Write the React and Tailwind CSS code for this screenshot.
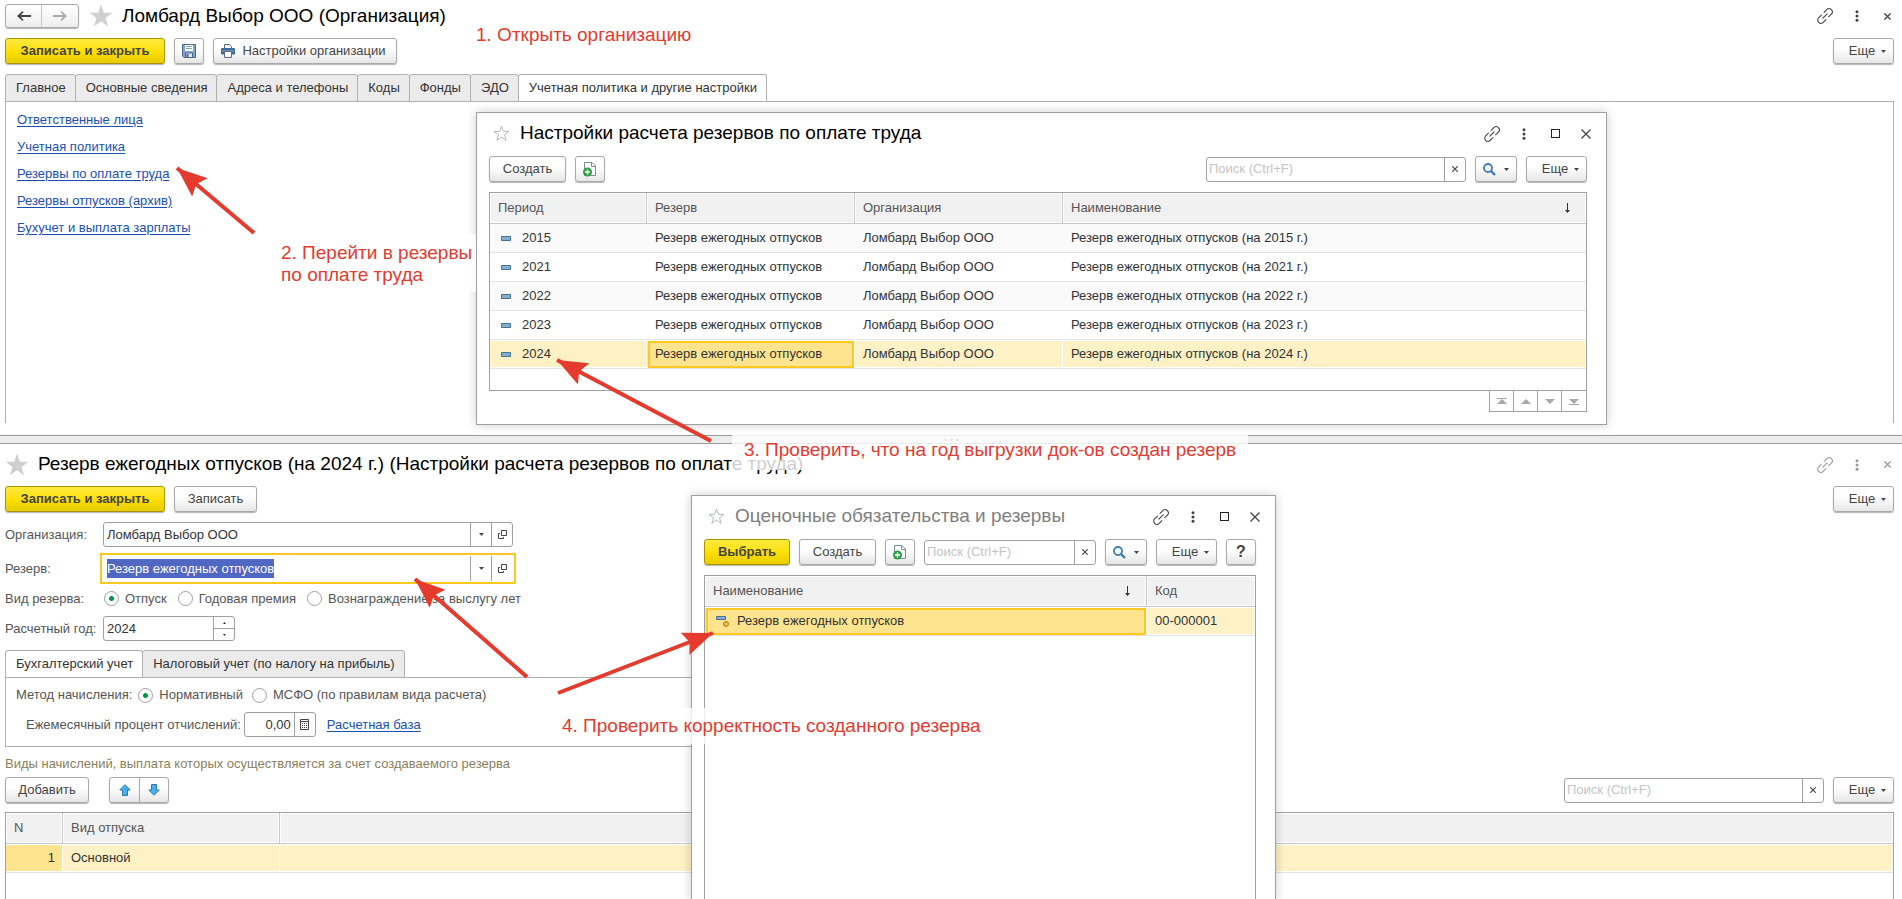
import clsx from "clsx"

const topTabs = ["Главное", "Основные сведения", "Адреса и телефоны", "Коды", "Фонды", "ЭДО", "Учетная политика и другие настройки"]

const links = [
  "Ответственные лица",
  "Учетная политика",
  "Резервы по оплате труда",
  "Резервы отпусков (архив)",
  "Бухучет и выплата зарплаты",
]

const years = [2015, 2021, 2022, 2023, 2024]

// Icons
const StarSolid = () => (
  <svg width="24" height="24" viewBox="0 0 24 24" className="shrink-0" aria-hidden="true">
    <path d="M12 0.5l2.8 8.3h8.7l-7 5.2 2.7 8.5-7.2-5.2-7.2 5.2L7.500 14l-7-5.200h8.700z" fill="#cfcfcf" />
  </svg>
)

const StarOutline = () => (
  <svg width="17" height="17" viewBox="0 0 17 17" className="shrink-0" aria-hidden="true">
    <path d="M8.500 1.200l1.900 5.200h5.600l-4.500 3.400 1.700 5.600-4.700-3.400-4.700 3.400 1.700-5.600L1 6.400h5.600z" fill="none" stroke="#b4b8bc" />
  </svg>
)

const LinkIcon = ({ color }) => (
  <svg width="16" height="16" viewBox="0 0 16 16" fill="none" stroke={color} strokeWidth="1.100" overflow="visible" aria-hidden="true">
    <g transform="rotate(-45 8 8)">
      <path d="M6.500 4.800H2.200a3.200 3.200 0 0 0 0 6.400H6.500M9.500 4.800H13.800a3.200 3.200 0 0 1 0 6.400H9.500M4.500 8H11.500" />
    </g>
  </svg>
)

const DotsIcon = ({ color }) => (
  <svg width="4" height="12" viewBox="0 0 4 12" fill={color} aria-hidden="true">
    <circle cx="2" cy="1.700" r="1.500" />
    <circle cx="2" cy="6" r="1.500" />
    <circle cx="2" cy="10.300" r="1.500" />
  </svg>
)

const CrossIcon = ({ size, color }) => (
  <svg width={size} height={size} viewBox="0 0 10 10" stroke={color} strokeWidth={size < 10 ? 1.9 : 1.3} aria-hidden="true">
    <path d="M0.500 0.500l9 9M9.500 0.500l-9 9" />
  </svg>
)

const ArrowIcon = ({ color, flip }) => (
  <svg width="14" height="12" viewBox="0 0 14 12" className={clsx(flip && "rotate-180")} aria-hidden="true">
    <path d="M0 6l5.500-5 1 1L4 5h10v2H4l2.500 3-1 1z" fill={color} />
  </svg>
)

const SaveIcon = () => (
  <svg width="14" height="14" viewBox="0 0 14 14" aria-hidden="true">
    <path d="M0.500 0.500h13v13h-11.500l-1.500-1.500z" fill="#7fa6cf" stroke="#48698f" />
    <path d="M3 1h8v6H3z" fill="#fff" />
    <path d="M4 2.500h6M4 4.500h6" stroke="#8fa2b5" />
    <path d="M3.500 9h7v4.500h-7z" fill="#dfe6ec" stroke="#48698f" />
    <path d="M4.500 10h2v3h-2z" fill="#48698f" />
  </svg>
)

const PrintIcon = () => (
  <svg width="14" height="14" viewBox="0 0 14 14" aria-hidden="true">
    <path d="M3.500 4.500v-4h5l2 2v2" fill="#fff" stroke="#5b6f86" />
    <rect x="0" y="4" width="14" height="6.500" rx="1" fill="#3f6c9b" />
    <path d="M1 7h12" stroke="#86a9cc" />
    <path d="M3.500 7.500h7v6h-7z" fill="#fff" stroke="#5b6f86" />
  </svg>
)

const CopyIcon = () => (
  <svg width="14" height="16" viewBox="0 0 14 16" aria-hidden="true">
    <path d="M1.500 1.500h7.500l3.500 3.500v9.500h-11z" fill="#fff" stroke="#7c8c9d" />
    <path d="M8.500 1.500v4h4" fill="none" stroke="#7c8c9d" />
    <circle cx="4.500" cy="11" r="4.500" fill="#2f9e44" />
    <path d="M4.500 8.500v5M2 11h5" stroke="#fff" strokeWidth="1.400" />
  </svg>
)

const SearchIcon = () => (
  <svg width="13" height="13" viewBox="0 0 13 13" fill="none" stroke="#3b7db4" aria-hidden="true">
    <circle cx="5" cy="5" r="4" strokeWidth="1.800" />
    <path d="M8 8l4 4" strokeWidth="2.400" />
  </svg>
)

const Caret = () => (
  <svg width="5" height="3" viewBox="0 0 5 3" aria-hidden="true">
    <path d="M0 0h5L2.500 3z" fill="#444" />
  </svg>
)

const OpenIcon = () => (
  <svg width="9" height="9" viewBox="0 0 9 9" fill="none" stroke="#444" aria-hidden="true">
    <path d="M3.500 0.500h5v5h-5zM2 3.500H0.500v5h5V7" />
  </svg>
)

const CalcIcon = () => (
  <svg width="9" height="11" viewBox="0 0 9 11" fill="none" stroke="#444" aria-hidden="true">
    <path d="M0.500 0.500h8v10h-8zM1 2.500h7" />
    <path d="M2 4.500h5M2 6.500h5M2 8.500h5" strokeDasharray="1 1" />
  </svg>
)

const SortIcon = () => (
  <svg width="5" height="10" viewBox="0 0 5 10" aria-hidden="true">
    <path d="M2 0h1v7h2L2.500 10 0 7h2z" fill="#333" />
  </svg>
)

const ItemIcon = () => (
  <svg width="10" height="5" viewBox="0 0 10 5" className="shrink-0" aria-hidden="true">
    <path d="M0.500 0.500h9v4h-9z" fill="#7fb0d8" stroke="#4a6f8f" />
  </svg>
)

const PredefinedIcon = () => (
  <svg width="13" height="11" viewBox="0 0 13 11" className="shrink-0" aria-hidden="true">
    <path d="M0.500 0.500h9v3h-9z" fill="#7fb0d8" stroke="#4a6f8f" />
    <circle cx="10" cy="8" r="2.500" fill="#f2b632" stroke="#a8842a" />
  </svg>
)

const MoveArrow = ({ flip }) => (
  <svg width="12" height="12" viewBox="0 0 12 12" className={clsx(flip && "rotate-180")} aria-hidden="true">
    <path d="M6 0.700l5.200 5.300H8.500v5.500h-5V6H0.800z" fill="#45b0ee" stroke="#2b78a8" />
  </svg>
)

const ScrollIcon = ({ bar, flip }) => (
  <svg width="10" height="7" viewBox="0 0 10 7" fill="#a8a8a8" className={clsx(flip && "rotate-180")} aria-hidden="true">
    {bar && <path d="M0 0h10v1H0z" />}
    <path d="M5 1l5 5H0z" />
  </svg>
)

// Controls
function Button({ children, primary, className, ...props }) {
  return (
    <button
      className={clsx(
        "flex h-[26px] shrink-0 items-center justify-center rounded-[3px] border shadow-[0_1px_1px_#b4b4b4]",
        primary
          ? "border-[#a89400] bg-linear-to-b from-[#ffea3c] via-[#fde000] to-[#e8cc00] font-bold text-[#444]"
          : "border-[#a9a9a9] bg-linear-to-b from-white from-40% to-[#e6e6e6] text-[#444]",
        className
      )}
      {...props}
    >
      {children}
    </button>
  )
}

const MoreButton = () => (
  <Button className="w-[61px] gap-[6px] pl-2">
    Еще <Caret />
  </Button>
)

const FindButton = () => (
  <Button className="w-[42px] gap-2" aria-label="Найти">
    <SearchIcon />
    <Caret />
  </Button>
)

const CopyButton = () => (
  <Button className="w-[30px]" aria-label="Скопировать">
    <CopyIcon />
  </Button>
)

function Search({ className }) {
  return (
    <div className={clsx("flex h-[25px] rounded-[3px] border border-[#a0a0a0] bg-white", className)}>
      <input
        type="text"
        aria-label="Поиск"
        placeholder="Поиск (Ctrl+F)"
        className="min-w-0 flex-1 px-[2px] outline-none placeholder:text-[#c4c4c4]"
      />
      <button aria-label="Очистить" className="flex w-[21px] items-center justify-center border-l border-[#a0a0a0]">
        <CrossIcon size={6} color="#444" />
      </button>
    </div>
  )
}

function Tab({ children, active }) {
  return (
    <button
      role="tab"
      aria-selected={!!active}
      className={clsx(
        "-ml-px h-[28px] rounded-t-[3px] border border-[#b0b0b0] pr-[9px] pl-[10px] text-[#333]",
        active ? "border-b-white bg-white" : "bg-[#ebebeb]"
      )}
    >
      {children}
    </button>
  )
}

function Radio({ id, name, label, checked }) {
  return (
    <span className="flex items-center gap-[6px]">
      <input
        type="radio"
        id={id}
        name={name}
        defaultChecked={checked}
        className="size-[15px] appearance-none rounded-full border border-[#a0a0a0] bg-white checked:bg-[radial-gradient(circle,#009846_2px,white_3px)]"
      />
      <label htmlFor={id}>{label}</label>
    </span>
  )
}

const WindowIcons = ({ color = "#444", full }) => (
  <div className={clsx("ml-auto flex shrink-0 items-center", !full && "pr-[3px]")}>
    <button aria-label="Получить ссылку"><LinkIcon color={color} /></button>
    <button aria-label="Дополнительно" className="ml-[22px]"><DotsIcon color={color} /></button>
    {full ? (
      <>
        <button aria-label="Развернуть" className="ml-[25px] size-[9px] border border-[#222]"></button>
        <button aria-label="Закрыть" className="ml-[21px]"><CrossIcon size={10} color={color} /></button>
      </>
    ) : (
      <button aria-label="Закрыть" className="ml-[25px]"><CrossIcon size={7} color={color} /></button>
    )}
  </div>
)

function Th({ children, className }) {
  return (
    <th
      className={clsx(
        "h-[31px] border-b border-[#c8c8c8] bg-[#f1f1f1] px-2 text-left font-normal text-[#555] shadow-[inset_0_0_0_1px_white]",
        className
      )}
    >
      {children}
    </th>
  )
}

function Td({ children, selected, current, stripe, className }) {
  return (
    <td
      className={clsx(
        "h-[29px] border-b border-[#e4e4e4] px-2",
        stripe && "bg-[#fafafa]",
        selected && "shadow-[inset_0_1px_0_white,inset_0_-1px_0_white,inset_-1px_0_0_white]",
        selected && (current ? "bg-[#ffe48f]" : "bg-[#fdf1c5]"),
        className
      )}
    >
      {children}
    </td>
  )
}

const focusCell = "outline-2 -outline-offset-3 outline-[#fdc821]"

function ReservesWindow() {
  return (
    <section className="absolute top-[112px] left-[476px] z-10 w-[1131px] border border-[#a0a0a0] bg-white px-3 pb-3 shadow-[0_0_10px_rgba(0,0,0,0.2)]">
      <header className="flex h-[43px] items-center pr-[3px] pb-[2px] pl-1">
        <StarOutline />
        <h2 className="ml-[10px] text-[19px] text-black">Настройки расчета резервов по оплате труда</h2>
        <WindowIcons full />
      </header>
      <div className="flex items-center gap-[9px] pr-[7px]">
        <Button className="w-[77px]">Создать</Button>
        <CopyButton />
        <Search className="ml-auto w-[260px]" />
        <FindButton />
        <MoreButton />
      </div>
      <div className="mt-[10px] mr-[7px]">
        <div className="h-[199px] border border-[#a0a0a0]">
          <table className="w-full table-fixed border-separate border-spacing-0 whitespace-nowrap">
            <colgroup>
              <col className="w-[157px]" />
              <col className="w-[208px]" />
              <col className="w-[208px]" />
              <col />
            </colgroup>
            <thead>
              <tr>
                <Th className="border-r">Период</Th>
                <Th className="border-r">Резерв</Th>
                <Th className="border-r">Организация</Th>
                <Th>
                  <span className="flex items-center justify-between pr-2">
                    Наименование <SortIcon />
                  </span>
                </Th>
              </tr>
            </thead>
            <tbody>
              {years.map((year, i) => {
                const row = { stripe: i % 2 === 0, selected: year === 2024 }
                return (
                  <tr key={year}>
                    <Td {...row}>
                      <span className="flex items-center gap-[11px] pl-[3px]">
                        <ItemIcon /> {year}
                      </span>
                    </Td>
                    <Td {...row} current className={clsx(row.selected && focusCell)}>Резерв ежегодных отпусков</Td>
                    <Td {...row}>Ломбард Выбор ООО</Td>
                    <Td {...row}>Резерв ежегодных отпусков (на {year} г.)</Td>
                  </tr>
                )
              })}
            </tbody>
          </table>
        </div>
        <div className="-mt-px flex justify-end">
          <div className="flex h-[22px] divide-x divide-[#a0a0a0] border border-[#a0a0a0] *:flex *:w-[24px] *:items-center *:justify-center">
            <button aria-label="В начало"><ScrollIcon bar /></button>
            <button aria-label="Вверх"><ScrollIcon /></button>
            <button aria-label="Вниз"><ScrollIcon flip /></button>
            <button aria-label="В конец"><ScrollIcon bar flip /></button>
          </div>
        </div>
      </div>
    </section>
  )
}

function ObligationsWindow() {
  return (
    <section className="absolute top-[495px] -bottom-1 left-[691px] z-10 flex w-[585px] flex-col border border-[#a0a0a0] bg-white pr-[19px] pl-3 shadow-[0_0_10px_rgba(0,0,0,0.2)]">
      <header className="-mr-1 flex h-[43px] shrink-0 items-center pb-[2px] pl-1">
        <StarOutline />
        <h2 className="ml-[10px] text-[19px] text-[#808080]">Оценочные обязательства и резервы</h2>
        <WindowIcons full />
      </header>
      <div className="flex items-center gap-[9px]">
        <Button primary className="w-[86px]">Выбрать</Button>
        <Button className="w-[77px]">Создать</Button>
        <CopyButton />
        <Search className="min-w-0 flex-1" />
        <FindButton />
        <MoreButton />
        <Button className="w-[30px] text-base font-bold">?</Button>
      </div>
      <div className="mt-[10px] flex-1 border border-[#a0a0a0]">
        <table className="w-full table-fixed border-separate border-spacing-0 whitespace-nowrap">
          <colgroup>
            <col />
            <col className="w-[108px]" />
          </colgroup>
          <thead>
            <tr>
              <Th className="border-r">
                <span className="flex items-center justify-between pr-2">
                  Наименование <SortIcon />
                </span>
              </Th>
              <Th>Код</Th>
            </tr>
          </thead>
          <tbody>
            <tr>
              <Td selected current className={focusCell}>
                <span className="flex items-center gap-2 pl-[3px]">
                  <PredefinedIcon /> Резерв ежегодных отпусков
                </span>
              </Td>
              <Td selected>00-000001</Td>
            </tr>
          </tbody>
        </table>
      </div>
    </section>
  )
}

function OrganizationPane() {
  return (
    <main className="flex h-[435px] shrink-0 flex-col pr-2 pl-[5px]">
      <header className="flex h-[34px] items-center pb-[2px]">
        <div className="flex h-[24px] divide-x divide-[#c8c8c8] rounded-[3px] border border-[#a9a9a9] bg-linear-to-b from-white to-[#eee] shadow-[0_1px_1px_#b4b4b4] *:flex *:w-[36px] *:items-center *:justify-center">
          <button aria-label="Назад"><ArrowIcon color="#444" /></button>
          <button aria-label="Вперед"><ArrowIcon color="#aaa" flip /></button>
        </div>
        <span className="ml-[10px]"><StarSolid /></span>
        <h1 className="ml-[9px] text-[19px] text-black">Ломбард Выбор ООО (Организация)</h1>
        <WindowIcons />
      </header>
      <div className="mt-1 flex gap-[9px]">
        <Button primary className="w-[160px]">Записать и закрыть</Button>
        <Button className="w-[30px]" aria-label="Записать"><SaveIcon /></Button>
        <Button className="w-[184px] gap-[7px] pr-[3px]">
          <PrintIcon /> Настройки организации
        </Button>
        <div className="ml-auto"><MoreButton /></div>
      </div>
      <div role="tablist" className="mt-[10px] -mb-px flex pl-px">
        {topTabs.map((tab, i) => (
          <Tab key={tab} active={i === topTabs.length - 1}>{tab}</Tab>
        ))}
      </div>
      <nav className="mb-3 flex flex-1 flex-col items-start gap-[11px] border border-b-0 border-[#b0b0b0] pt-[10px] pl-[11px] leading-4">
        {links.map((link) => (
          <a key={link} href="#" className="text-[#1a50b4] underline underline-offset-2">{link}</a>
        ))}
      </nav>
    </main>
  )
}

function LookupField({ id, value, focused }) {
  return (
    <div
      className={clsx(
        "flex bg-white",
        focused
          ? "-ml-[3px] h-[31px] w-[416px] border-2 border-[#fdc821] py-px pr-[2px]"
          : "h-[25px] w-[410px] rounded-[3px] border border-[#a0a0a0]"
      )}
    >
      <input
        id={id}
        type="text"
        defaultValue={value}
        autoFocus={focused}
        onFocus={(e) => e.target.select()}
        className={clsx(
          "min-w-0 flex-1 text-[#333] outline-none selection:bg-[#5068c4] selection:text-white",
          focused ? "pl-[5px]" : "pl-[3px]"
        )}
      />
      <button type="button" aria-label="Выбрать из списка" className="flex w-[21px] items-center justify-center border-l border-[#a0a0a0]">
        <Caret />
      </button>
      <button type="button" aria-label="Открыть" className="flex w-[21px] items-center justify-center border-l border-[#a0a0a0]">
        <OpenIcon />
      </button>
    </div>
  )
}

function ReservePane() {
  return (
    <main className="flex min-h-0 flex-1 flex-col pr-2 pl-[5px]">
      <header className="flex h-[42px] items-center pb-px">
        <StarSolid />
        <h1 className="ml-[9px] text-[19px] text-black">
          Резерв ежегодных отпусков (на 2024 г.) (Настройки расчета резервов по оплате труда)
        </h1>
        <WindowIcons color="#999" />
      </header>
      <div className="flex gap-[9px]">
        <Button primary className="w-[160px]">Записать и закрыть</Button>
        <Button className="w-[83px]">Записать</Button>
        <div className="ml-auto"><MoreButton /></div>
      </div>

      <form className="mt-[10px] grid grid-cols-[98px_1fr] items-center text-[#555]">
        <label htmlFor="org">Организация:</label>
        <LookupField id="org" value="Ломбард Выбор ООО" />

        <label htmlFor="reserve" className="mt-[6px]">Резерв:</label>
        <div className="mt-[6px]">
          <LookupField id="reserve" value="Резерв ежегодных отпусков" focused />
        </div>

        <span className="leading-[29px]">Вид резерва:</span>
        <div className="flex gap-[11px] pl-px">
          <Radio id="kind-vacation" name="kind" label="Отпуск" checked />
          <Radio id="kind-bonus" name="kind" label="Годовая премия" />
          <Radio id="kind-service" name="kind" label="Вознаграждение за выслугу лет" />
        </div>

        <label htmlFor="year" className="mt-[3px]">Расчетный год:</label>
        <div className="mt-[3px] flex h-[25px] w-[132px] rounded-[3px] border border-[#a0a0a0]">
          <input id="year" type="text" defaultValue="2024" className="min-w-0 flex-1 pl-[3px] text-[#333] outline-none" />
          <div className="flex w-[21px] flex-col divide-y divide-[#a0a0a0] border-l border-[#a0a0a0] *:flex *:flex-1 *:items-center *:justify-center">
            <button type="button" aria-label="Больше">
              <svg width="3" height="2" viewBox="0 0 3 2" aria-hidden="true"><path d="M0 2h3L1.500 0z" fill="#333" /></svg>
            </button>
            <button type="button" aria-label="Меньше">
              <svg width="3" height="2" viewBox="0 0 3 2" aria-hidden="true"><path d="M0 0h3L1.500 2z" fill="#333" /></svg>
            </button>
          </div>
        </div>
      </form>

      <div role="tablist" className="mt-[9px] -mb-px flex pl-px">
        <Tab active>Бухгалтерский учет</Tab>
        <Tab>Налоговый учет (по налогу на прибыль)</Tab>
      </div>
      <div className="flex h-[70px] w-1/2 shrink-0 flex-col gap-[9px] border border-[#b0b0b0] pt-[9px] pl-[10px] text-[#555]">
        <div className="flex h-4 items-center">
          <span className="mr-[6px]">Метод начисления:</span>
          <div className="flex gap-[9px]">
            <Radio id="method-norm" name="method" label="Нормативный" checked />
            <Radio id="method-ifrs" name="method" label="МСФО (по правилам вида расчета)" />
          </div>
        </div>
        <div className="flex items-center pl-[10px]">
          <label htmlFor="percent" className="mr-[3px]">Ежемесячный процент отчислений:</label>
          <div className="flex h-[25px] w-[72px] rounded-[3px] border border-[#a0a0a0]">
            <input id="percent" type="text" defaultValue="0,00" className="min-w-0 flex-1 pr-[3px] text-right text-[#333] outline-none" />
            <button aria-label="Калькулятор" className="flex w-[21px] items-center justify-center border-l border-[#a0a0a0]">
              <CalcIcon />
            </button>
          </div>
          <a href="#" className="ml-[11px] text-[#1a50b4] underline underline-offset-2">Расчетная база</a>
        </div>
      </div>

      <p className="mt-[9px] leading-4 text-[#8a8060]">
        Виды начислений, выплата которых осуществляется за счет создаваемого резерва
      </p>
      <div className="mt-[5px] flex items-center gap-[9px]">
        <Button className="w-[84px]">Добавить</Button>
        <div className="ml-[11px] flex">
          <Button className="w-[31px] rounded-r-none" aria-label="Переместить вверх"><MoveArrow /></Button>
          <Button className="-ml-px w-[30px] rounded-l-none" aria-label="Переместить вниз"><MoveArrow flip /></Button>
        </div>
        <Search className="ml-auto w-[260px]" />
        <MoreButton />
      </div>

      <div className="mt-[9px] min-h-0 flex-1 border border-b-0 border-[#a0a0a0]">
        <table className="w-full table-fixed border-separate border-spacing-0">
          <colgroup>
            <col className="w-[57px]" />
            <col className="w-[217px]" />
            <col />
          </colgroup>
          <thead>
            <tr>
              <Th className="border-r">N</Th>
              <Th className="border-r">Вид отпуска</Th>
              <Th />
            </tr>
          </thead>
          <tbody>
            <tr>
              <Td selected current className="text-right">1</Td>
              <Td selected>Основной</Td>
              <Td selected />
            </tr>
          </tbody>
        </table>
      </div>
    </main>
  )
}

// Red arrows pointing from a note to the control it explains
const arrows = [
  { x1: 254, y1: 233, x2: 177, y2: 168 },
  { x1: 711, y1: 441, x2: 557, y2: 360 },
  { x1: 527, y1: 677, x2: 415, y2: 579 },
  { x1: 558, y1: 693, x2: 713, y2: 633 },
]

function Notes() {
  return (
    <div className="pointer-events-none absolute inset-0 z-20 text-[19px] leading-[22px] text-[#e53a2e]">
      <p className="absolute top-6 left-[476px]">1. Открыть организацию</p>
      <p className="absolute top-[234px] left-[269px] bg-white/85 pt-2 pr-1 pb-[6px] pl-3">
        2. Перейти в резервы
        <br />
        по оплате труда
      </p>
      <p className="absolute top-[432px] left-[732px] bg-white/80 px-3 pt-[7px] pb-[9px]">
        3. Проверить, что на год выгрузки док-ов создан резерв
      </p>
      <p className="absolute top-[708px] left-[550px] bg-white/80 px-3 py-[7px]">
        4. Проверить корректность созданного резерва
      </p>
      <svg className="absolute inset-0 size-full" aria-hidden="true">
        <defs>
          <marker id="head" markerUnits="userSpaceOnUse" markerWidth="32" markerHeight="26" refX="30" refY="13" orient="auto">
            <path d="M30 13L0 1l5 12-5 12z" fill="#e53a2e" />
          </marker>
        </defs>
        {arrows.map((a) => (
          <line key={a.x1} {...a} stroke="#e53a2e" strokeWidth="4" markerEnd="url(#head)" />
        ))}
      </svg>
    </div>
  )
}

export default function App() {
  return (
    <div className="relative flex h-screen flex-col overflow-hidden bg-white font-['Liberation_Sans',Arial,sans-serif] text-[13px] text-[#333]">
      <OrganizationPane />
      <div className="flex h-[9px] shrink-0 items-center justify-center gap-[3px] border-y border-[#999] bg-[#ededed]">
        <span className="size-[3px] rounded-full bg-[#999]" />
        <span className="size-[3px] rounded-full bg-[#999]" />
        <span className="size-[3px] rounded-full bg-[#999]" />
      </div>
      <ReservePane />
      <ReservesWindow />
      <ObligationsWindow />
      <Notes />
    </div>
  )
}
